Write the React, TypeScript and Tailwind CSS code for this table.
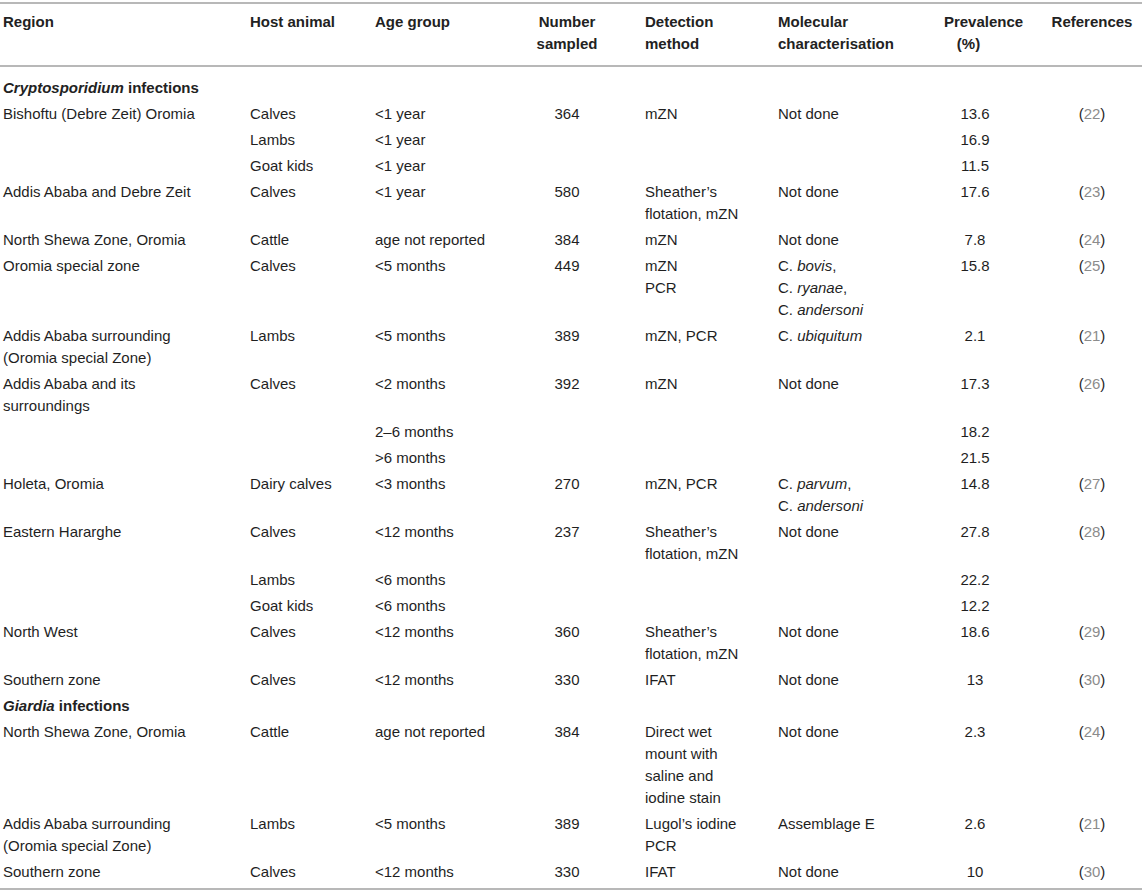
import type { ReactNode } from "react";

type Row = {
  region?: string;
  host?: string;
  age?: string;
  sampled?: string;
  method?: string;
  molecular?: ReactNode;
  prevalence?: string;
  reference?: string;
};

type Section = { genus: string; rows: Row[] };

const sp = (name: string, trail = "") => (
  <>
    C. <i>{name}</i>
    {trail}
  </>
);

const sections: Section[] = [
  {
    genus: "Cryptosporidium",
    rows: [
      { region: "Bishoftu (Debre Zeit) Oromia", host: "Calves", age: "<1 year", sampled: "364", method: "mZN", molecular: "Not done", prevalence: "13.6", reference: "22" },
      { host: "Lambs", age: "<1 year", prevalence: "16.9" },
      { host: "Goat kids", age: "<1 year", prevalence: "11.5" },
      { region: "Addis Ababa and Debre Zeit", host: "Calves", age: "<1 year", sampled: "580", method: "Sheather’s\nflotation, mZN", molecular: "Not done", prevalence: "17.6", reference: "23" },
      { region: "North Shewa Zone, Oromia", host: "Cattle", age: "age not reported", sampled: "384", method: "mZN", molecular: "Not done", prevalence: "7.8", reference: "24" },
      {
        region: "Oromia special zone",
        host: "Calves",
        age: "<5 months",
        sampled: "449",
        method: "mZN\nPCR",
        molecular: (
          <>
            {sp("bovis", ",")}
            <br />
            {sp("ryanae", ",")}
            <br />
            {sp("andersoni")}
          </>
        ),
        prevalence: "15.8",
        reference: "25",
      },
      { region: "Addis Ababa surrounding\n(Oromia special Zone)", host: "Lambs", age: "<5 months", sampled: "389", method: "mZN, PCR", molecular: sp("ubiquitum"), prevalence: "2.1", reference: "21" },
      { region: "Addis Ababa and its\nsurroundings", host: "Calves", age: "<2 months", sampled: "392", method: "mZN", molecular: "Not done", prevalence: "17.3", reference: "26" },
      { age: "2–6 months", prevalence: "18.2" },
      { age: ">6 months", prevalence: "21.5" },
      {
        region: "Holeta, Oromia",
        host: "Dairy calves",
        age: "<3 months",
        sampled: "270",
        method: "mZN, PCR",
        molecular: (
          <>
            {sp("parvum", ",")}
            <br />
            {sp("andersoni")}
          </>
        ),
        prevalence: "14.8",
        reference: "27",
      },
      { region: "Eastern Hararghe", host: "Calves", age: "<12 months", sampled: "237", method: "Sheather’s\nflotation, mZN", molecular: "Not done", prevalence: "27.8", reference: "28" },
      { host: "Lambs", age: "<6 months", prevalence: "22.2" },
      { host: "Goat kids", age: "<6 months", prevalence: "12.2" },
      { region: "North West", host: "Calves", age: "<12 months", sampled: "360", method: "Sheather’s\nflotation, mZN", molecular: "Not done", prevalence: "18.6", reference: "29" },
      { region: "Southern zone", host: "Calves", age: "<12 months", sampled: "330", method: "IFAT", molecular: "Not done", prevalence: "13", reference: "30" },
    ],
  },
  {
    genus: "Giardia",
    rows: [
      { region: "North Shewa Zone, Oromia", host: "Cattle", age: "age not reported", sampled: "384", method: "Direct wet\nmount with\nsaline and\niodine stain", molecular: "Not done", prevalence: "2.3", reference: "24" },
      { region: "Addis Ababa surrounding\n(Oromia special Zone)", host: "Lambs", age: "<5 months", sampled: "389", method: "Lugol’s iodine\nPCR", molecular: "Assemblage E", prevalence: "2.6", reference: "21" },
      { region: "Southern zone", host: "Calves", age: "<12 months", sampled: "330", method: "IFAT", molecular: "Not done", prevalence: "10", reference: "30" },
    ],
  },
];

const cell = "whitespace-pre-line align-top leading-[22px]";

function Ref({ n }: { n?: string }) {
  if (!n) return null;
  return (
    <span>
      (<span className="text-[#8c8c8c]">{n}</span>)
    </span>
  );
}

export default function App() {
  return (
    <div
      className="min-h-[895px] w-[1142px] bg-white pt-[2px] text-[15px] text-[#1f1f1f]"
      style={{ fontFamily: '"Liberation Sans", Arial, Helvetica, sans-serif' }}
    >
      <table className="w-full table-fixed border-collapse">
        <colgroup>
          <col className="w-[247px]" />
          <col className="w-[125px]" />
          <col className="w-[138px]" />
          <col className="w-[114px]" />
          <col className="w-[151px]" />
          <col className="w-[150px]" />
          <col className="w-[117px]" />
          <col className="w-[100px]" />
        </colgroup>
        <thead>
          <tr className="border-y-2 border-[#b8b8b8] font-bold text-[#222]">
            <th className={`${cell} pb-[10px] pl-[3px] pt-[7px] text-left`}>Region</th>
            <th className={`${cell} pb-[10px] pl-[3px] pt-[7px] text-left`}>Host animal</th>
            <th className={`${cell} pb-[10px] pl-[3px] pt-[7px] text-left`}>Age group</th>
            <th className={`${cell} pb-[10px] pt-[7px] text-center`}>{"Number\nsampled"}</th>
            <th className={`${cell} pb-[10px] pl-[21px] pt-[7px] text-left`}>{"Detection\nmethod"}</th>
            <th className={`${cell} pb-[10px] pl-[3px] pt-[7px] text-left`}>{"Molecular\ncharacterisation"}</th>
            <th className={`${cell} pb-[10px] pt-[7px] text-center`}>
              <div>Prevalence</div>
              <div className="pr-[30px]">(%)</div>
            </th>
            <th className={`${cell} pb-[10px] pt-[7px] text-center`}>References</th>
          </tr>
        </thead>
        <tbody className="border-b-2 border-[#b8b8b8]">
          {sections.map((s, si) => (
            <SectionRows key={s.genus} section={s} first={si === 0} last={si === sections.length - 1} />
          ))}
        </tbody>
      </table>
    </div>
  );
}

function SectionRows({ section, first, last }: { section: Section; first: boolean; last: boolean }) {
  return (
    <>
      <tr>
        <td colSpan={8} className={`${cell} pb-[2px] pl-[3px] font-bold text-[#222] ${first ? "pt-[10px]" : "pt-[2px]"}`}>
          <i>{section.genus}</i> infections
        </td>
      </tr>
      {section.rows.map((r, i) => {
        const pb = last && i === section.rows.length - 1 ? "pb-[5px]" : "pb-[2px]";
        const pad = `py-[2px] ${pb}`;
        return (
          <tr key={i}>
            <td className={`${cell} ${pad} pl-[3px] pr-[30px]`}>{r.region}</td>
            <td className={`${cell} ${pad} pl-[3px]`}>{r.host}</td>
            <td className={`${cell} ${pad} pl-[3px]`}>{r.age}</td>
            <td className={`${cell} ${pad} text-center`}>{r.sampled}</td>
            <td className={`${cell} ${pad} pl-[21px]`}>{r.method}</td>
            <td className={`${cell} ${pad} pl-[3px]`}>{r.molecular}</td>
            <td className={`${cell} ${pad} pr-[17px] text-center`}>{r.prevalence}</td>
            <td className={`${cell} ${pad} text-center`}>
              <Ref n={r.reference} />
            </td>
          </tr>
        );
      })}
    </>
  );
}
